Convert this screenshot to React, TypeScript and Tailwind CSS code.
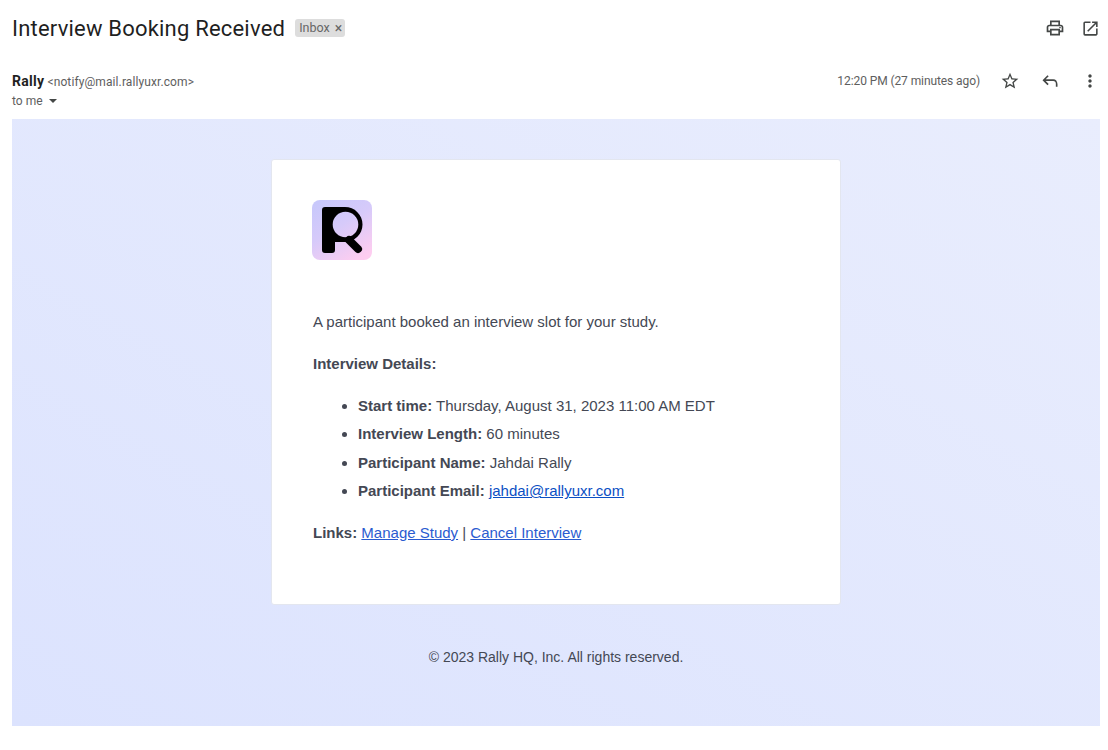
import { MdOutlinePrint, MdOpenInNew, MdStarBorder, MdMoreVert } from 'react-icons/md'

const details = [
  { label: 'Start time:', value: 'Thursday, August 31, 2023 11:00 AM EDT' },
  { label: 'Interview Length:', value: '60 minutes' },
  { label: 'Participant Name:', value: 'Jahdai Rally' },
]

function RallyLogo() {
  return (
    <svg width="60" height="60" viewBox="0 0 60 60" className="-ml-px">
      <defs>
        <linearGradient id="rally-bg" x1="0.15" y1="0" x2="0.75" y2="1">
          <stop offset="0" stopColor="#c8c8fb" />
          <stop offset="0.45" stopColor="#d6cafa" />
          <stop offset="1" stopColor="#fdcdf0" />
        </linearGradient>
      </defs>
      <rect width="60" height="60" rx="8" fill="url(#rally-bg)" />
      <line x1="37" y1="40" x2="46" y2="49" stroke="#000" strokeWidth="8" strokeLinecap="round" />
      <path
        fillRule="evenodd"
        d="M13 7H33A17.500 17.500 0 0 1 33 42H23V50A3 3 0 0 1 20 53H13A3 3 0 0 1 10 50V10A3 3 0 0 1 13 7ZM20.700 24.500a12.800 12.800 0 1 0 25.600 0a12.800 12.800 0 1 0 -25.600 0Z"
        fill="#000"
      />
    </svg>
  )
}

function ReplyIcon() {
  return (
    <svg width="20" height="20" viewBox="0 0 24 24" className="ml-5 -mt-px text-[#444746]" fill="currentColor">
      <path d="M19 19v-4q0-1.250-.875-2.125T16 12H6.825l3.600 3.600L9 17l-6-6 6-6 1.425 1.400-3.600 3.600H16q2.075 0 3.537 1.463Q21 13.925 21 16v3Z" />
    </svg>
  )
}

export default function App() {
  return (
    <div className="w-[1108px] h-[750px] bg-white overflow-hidden font-['Roboto',sans-serif]">
      {/* Subject */}
      <div className="flex items-center justify-between h-[56px] pl-3 pr-2">
        <div className="flex items-center">
          <h1 className="text-[22px] text-[#1f1f1f] tracking-[0.2px]">Interview Booking Received</h1>
          <span className="flex items-center ml-[10px] h-[18px] pl-1 pr-[3px] rounded-[3px] bg-[#dddddd] text-[12.500px] text-[#666666]">
            Inbox <span className="ml-[5px] text-[14px] leading-[14px]">×</span>
          </span>
        </div>
        <div className="flex items-center gap-4">
          <MdOutlinePrint size={20} className="-ml-px text-[#444746]" />
          <MdOpenInNew size={19} className="text-[#444746]" />
        </div>
      </div>

      {/* Sender */}
      <div className="flex justify-between h-[63px] pl-3 pr-2 pt-4">
        <div>
          <div className="text-[12px] leading-[18px] tracking-[0.1px] text-[#5e5e5e]">
            <span className="text-[14px] font-bold tracking-[0.3px] text-[#1f1f1f]">Rally</span> &lt;notify@mail.rallyuxr.com&gt;
          </div>
          <div className="flex items-center text-[12px] leading-[20px] text-[#5e5e5e]">
            to me
            <span className="ml-[6px] w-0 h-0 border-x-[4px] border-x-transparent border-t-[4px] border-t-[#444746]" />
          </div>
        </div>
        <div className="flex items-start">
          <span className="text-[12px] leading-[18px] tracking-[-0.09px] text-[#5e5e5e]">12:20 PM (27 minutes ago)</span>
          <MdStarBorder size={20} className="ml-5 -mt-px text-[#444746]" />
          <ReplyIcon />
          <MdMoreVert size={20} className="ml-5 -mt-px text-[#444746]" />
        </div>
      </div>

      {/* Email body */}
      <div className="mx-3 w-[1088px] h-[607px] pt-10 bg-gradient-to-tr from-[#dce3fe] to-[#e9edfd] font-['Liberation_Sans',sans-serif] text-[15px] text-[#444854]">
        <div className="w-[570px] h-[446px] mx-auto pt-10 px-[41px] bg-white border border-[#e3e6ef] rounded-[3px]">
          <RallyLogo />
          <p className="mt-[52px] leading-[20px]">A participant booked an interview slot for your study.</p>
          <p className="mt-[22px] leading-[20px] font-bold">Interview Details:</p>
          <ul className="mt-[22px] pl-[45px] list-disc">
            {details.map((d) => (
              <li key={d.label} className="mb-2 leading-[20.400px]">
                <b>{d.label}</b> {d.value}
              </li>
            ))}
            <li className="leading-[20.400px]">
              <b>Participant Email:</b>{' '}
              <a href="#" className="underline text-[#0b4fc4]">jahdai@rallyuxr.com</a>
            </li>
          </ul>
          <p className="mt-[21px] leading-[20px]">
            <b>Links:</b>{' '}
            <a href="#" className="underline text-[#2a5bd0]">Manage Study</a> |{' '}
            <a href="#" className="underline text-[#2a5bd0]">Cancel Interview</a>
          </p>
        </div>
        <p className="mt-[42px] text-center text-[14px] leading-[20px]">© 2023 Rally HQ, Inc. All rights reserved.</p>
      </div>
    </div>
  )
}
